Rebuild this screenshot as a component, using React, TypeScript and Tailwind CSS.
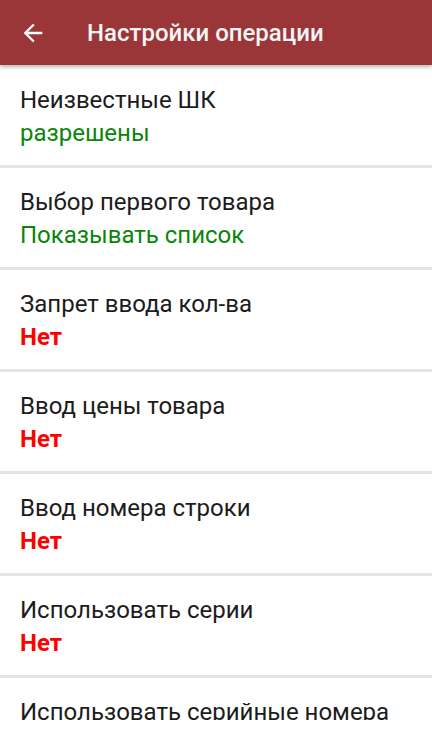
import React from "react";

const rows: { label: string; value: string; kind: "green" | "red" }[] = [
  { label: "Неизвестные ШК", value: "разрешены", kind: "green" },
  { label: "Выбор первого товара", value: "Показывать список", kind: "green" },
  { label: "Запрет ввода кол-ва", value: "Нет", kind: "red" },
  { label: "Ввод цены товара", value: "Нет", kind: "red" },
  { label: "Ввод номера строки", value: "Нет", kind: "red" },
  { label: "Использовать серии", value: "Нет", kind: "red" },
  { label: "Использовать серийные номера", value: "Нет", kind: "red" },
];

export default function App() {
  return (
    <div className="w-[432px] h-[738px] overflow-hidden bg-white relative" style={{ fontFamily: "Roboto, 'Noto Sans', sans-serif" }}>
      <div className="relative z-10 h-[65px] bg-[#9a3538] flex items-center shadow-[0_2px_4px_rgba(0,0,0,0.3)]">
        <div className="w-[28px] h-[28px] ml-[19px] flex items-center justify-center">
          <svg width="28" height="28" viewBox="0 0 24 24">
            <path d="M20 11H7.83l5.59-5.59L12 4l-8 8 8 8 1.41-1.41L7.83 13H20v-2z" fill="#ffffff" />
          </svg>
        </div>
        <div className="ml-[40px] text-[24px] font-medium text-[#f5f5f5]">Настройки операции</div>
      </div>
      <div className="flex flex-col h-[655px] overflow-hidden">
        {rows.map((r, i) => (
          <div key={i} className="flex flex-col shrink-0">
            <div className={i === 0 ? "pl-[20px] pt-[18px] pb-[16px]" : "pl-[20px] pt-[17px] pb-[16px]"}>
              <div className="text-[24px] leading-[34px] text-[#1c1c1c] whitespace-nowrap">{r.label}</div>
              <div
                className={
                  r.kind === "green"
                    ? "text-[24px] leading-[32px] text-[#0a850a]"
                    : "text-[24px] leading-[32px] text-[#ff0000] font-bold"
                }
              >
                {r.value}
              </div>
            </div>
            <div className="h-[3px] bg-[#e3e3e3]" />
          </div>
        ))}
      </div>
    </div>
  );
}
